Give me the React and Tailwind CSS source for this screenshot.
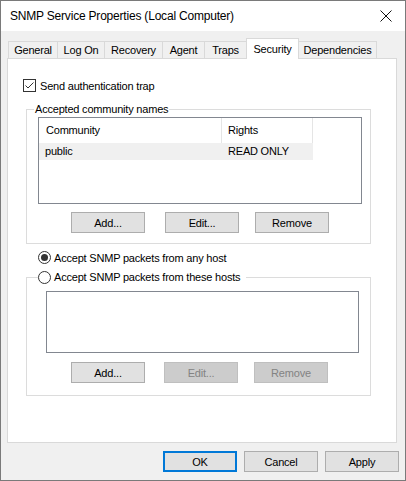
const tabs = [
  { label: "General", cls: "w-[50px]" },
  { label: "Log On", cls: "w-[48px] -ml-px" },
  { label: "Recovery", cls: "w-[59px] -ml-px" },
  { label: "Agent", cls: "w-[43px] -ml-px" },
  { label: "Traps", cls: "w-[43px] -ml-px" },
  { label: "Security", cls: "w-[53px] -ml-px", active: true },
  { label: "Dependencies", cls: "w-[79px] -ml-px" },
];

function Tab({ label, cls, active }) {
  if (active) {
    return (
      <div
        className={`${cls} h-[21px] -mb-px relative z-10 bg-white border-t border-x border-[#d9d9d9] flex justify-center pt-[3px] leading-[14px]`}
      >
        {label}
      </div>
    );
  }
  return (
    <div
      className={`${cls} h-[17px] bg-[#f0f0f0] border-t border-x border-[#d9d9d9] flex items-center justify-center leading-[14px]`}
    >
      {label}
    </div>
  );
}

function Button({ children, cls = "", disabled, focused }) {
  const base = "w-[74px] h-[21px] flex items-center justify-center leading-[14px] shrink-0";
  if (disabled) {
    return <div className={`${base} ${cls} bg-[#cccccc] border border-[#bfbfbf] text-[#838383]`}>{children}</div>;
  }
  if (focused) {
    return <div className={`${base} ${cls} bg-[#e1e1e1] border-2 border-[#0078d7]`}>{children}</div>;
  }
  return <div className={`${base} ${cls} bg-[#e1e1e1] border border-[#adadad]`}>{children}</div>;
}

function Radio({ checked }) {
  return (
    <div className="w-[13px] h-[13px] rounded-full border border-[#333333] bg-white flex items-center justify-center shrink-0">
      {checked && <div className="w-[7px] h-[7px] rounded-full bg-[#333333]" />}
    </div>
  );
}

export default function App() {
  return (
    <div className="w-[406px] h-[481px] border border-[#7a7a7a] bg-[#f0f0f0] flex flex-col font-['Liberation_Sans',Arial,sans-serif] text-[11px] tracking-[-0.2px] text-black select-none">
      {/* Title bar */}
      <div className="h-[30px] shrink-0 bg-white flex items-center pl-[9px]">
        <span className="text-[12px] leading-[16px] tracking-[-0.2px]">SNMP Service Properties (Local Computer)</span>
        <svg className="ml-auto mr-[13px]" width="12" height="12" viewBox="0 0 12 12">
          <path d="M0.5 0.5 L11.5 11.5 M11.5 0.5 L0.5 11.5" stroke="#111" strokeWidth="1" fill="none" />
        </svg>
      </div>

      {/* Body */}
      <div className="flex-1 flex flex-col px-[6px] pt-[7px]">
        {/* Tabs */}
        <div className="h-[20px] flex items-end pl-[1px]">
          {tabs.map((t) => (
            <Tab key={t.label} {...t} />
          ))}
        </div>

        {/* Panel */}
        <div className="w-[390px] h-[385px] border border-[#d9d9d9] bg-white flex flex-col">
          {/* Checkbox */}
          <div className="mt-[20px] ml-[15px] h-[13px] flex items-center">
            <div className="w-[13px] h-[13px] border border-[#333333] bg-white shrink-0">
              <svg width="11" height="11" viewBox="0 0 11 11">
                <path d="M1.5 5.5 L4 8 L9.5 2.5" stroke="#333333" strokeWidth="1" fill="none" />
              </svg>
            </div>
            <span className="ml-[4px] leading-[14px]">Send authentication trap</span>
          </div>

          {/* Group 1 */}
          <fieldset className="mt-[10px] ml-[18px] mr-[25px] border border-[#dcdcdc] pb-[10px]">
            <legend className="ml-[7px] px-[1px] leading-[14px]">Accepted community names</legend>
            <div className="mt-[1px] ml-[11px] mr-[8px] h-[87px] border border-[#828790] bg-white">
              <div className="h-[25px] flex">
                <div className="w-[183px] border-r border-[#e5e5e5] pl-[7px] flex items-center">Community</div>
                <div className="w-[91px] border-r border-[#e5e5e5] pl-[6px] flex items-center">Rights</div>
              </div>
              <div className="h-[17px] w-[274px] bg-[#f0f0f0] flex items-center">
                <div className="w-[183px] pl-[6px]">public</div>
                <div className="w-[91px] pl-[6px]">READ ONLY</div>
              </div>
            </div>
            <div className="mt-[8px] flex">
              <Button cls="ml-[44px]">Add...</Button>
              <Button cls="ml-[20px]">Edit...</Button>
              <Button cls="ml-[16px]">Remove</Button>
            </div>
          </fieldset>

          {/* Radio 1 */}
          <div className="mt-[7px] ml-[30px] h-[13px] flex items-center">
            <Radio checked />
            <span className="ml-[3px] leading-[14px]">Accept SNMP packets from any host</span>
          </div>

          {/* Group 2 */}
          <fieldset className="mt-[6px] ml-[18px] mr-[25px] border border-[#dcdcdc] pb-[12px]">
            <legend className="ml-[11px] pr-[6px] h-[14px] flex items-center">
              <Radio />
              <span className="ml-[3px] leading-[14px]">Accept SNMP packets from these hosts</span>
            </legend>
            <div className="mt-[7px] ml-[19px] mr-[11px] h-[62px] border border-[#828790] bg-white" />
            <div className="mt-[9px] flex">
              <Button cls="ml-[44px]">Add...</Button>
              <Button cls="ml-[19px]" disabled>Edit...</Button>
              <Button cls="ml-[16px]" disabled>Remove</Button>
            </div>
          </fieldset>
        </div>

        {/* Bottom buttons */}
        <div className="mt-[8px] flex justify-end gap-[7px]">
          <Button focused>OK</Button>
          <Button>Cancel</Button>
          <Button>Apply</Button>
        </div>
      </div>
    </div>
  );
}
